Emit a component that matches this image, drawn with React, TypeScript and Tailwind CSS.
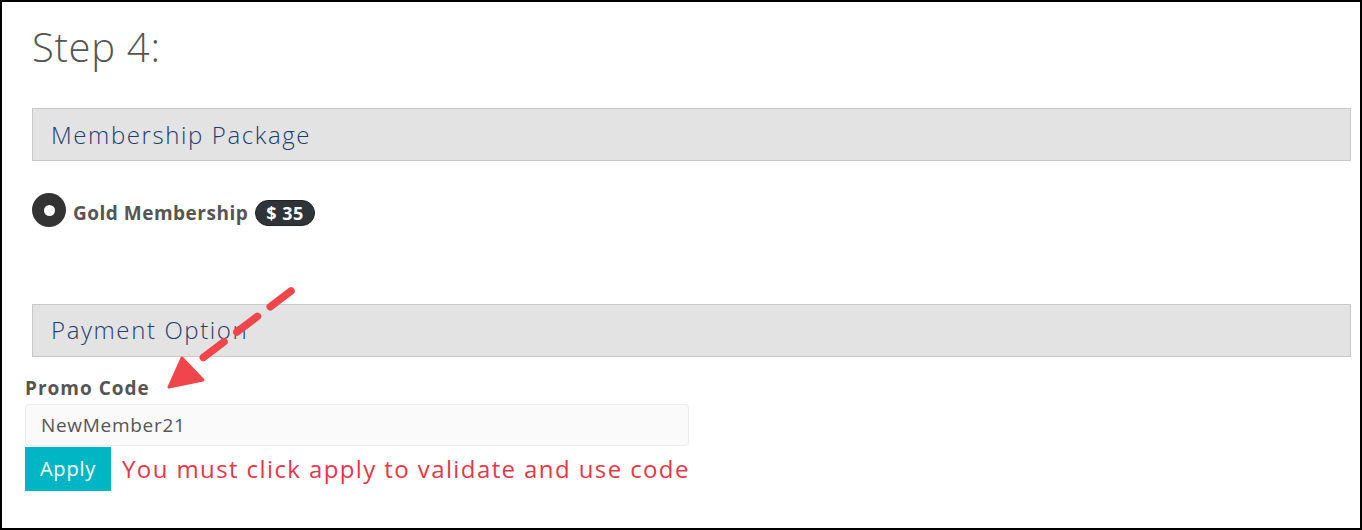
import { useState } from 'react';

function SectionBar({ title }: { title: string }) {
  return (
    <div className="border border-[#c9c9c9] bg-[#e3e3e3] h-[53px] flex items-center pl-[18px]">
      <span className="text-[24px] font-light text-[#1f3d6e] tracking-[1.6px]">{title}</span>
    </div>
  );
}

function Arrow() {
  return (
    <svg className="absolute left-0 top-0 pointer-events-none" width="320" height="400" viewBox="0 0 320 400">
      <line x1="289" y1="289" x2="190" y2="364" stroke="#f0454b" strokeWidth="7.5" strokeLinecap="round" strokeDasharray="26 16" />
      <polygon points="167,385 180,356 201,378" fill="#f0454b" stroke="#f0454b" strokeWidth="3" strokeLinejoin="round" />
    </svg>
  );
}

export default function App() {
  const [code, setCode] = useState('NewMember21');

  return (
    <div className="relative w-[1362px] h-[530px] bg-white border-2 border-black font-['Open_Sans',sans-serif] text-[#555]">
      <div className="pt-[20px] pl-[30px] pr-[9px]">
        <h1 className="text-[40px] font-light text-[#555] leading-[50px] tracking-[0.7px]">Step 4:</h1>
        <div className="mt-[36px]">
          <SectionBar title="Membership Package" />
        </div>
        <div className="mt-[32px] flex items-center">
          <span className="w-[34px] h-[34px] rounded-full bg-[#333] flex items-center justify-center">
            <span className="w-[11px] h-[11px] rounded-full bg-white" />
          </span>
          <span className="ml-[7px] mt-[6px] text-[19px] font-bold text-[#555] tracking-[0.5px]">Gold Membership</span>
          <span className="ml-[7px] mt-[6px] bg-[#2f3438] text-white text-[18px] font-bold rounded-full px-[10px] h-[26px] leading-[25px] border border-[#222] tracking-[0.5px]">$ 35</span>
        </div>
        <div className="mt-[76px]">
          <SectionBar title="Payment Option" />
        </div>
      </div>
      <div className="pl-[23px] mt-[19px]">
        <label className="block text-[19px] font-bold text-[#555] leading-[25px] tracking-[1px]">Promo Code</label>
        <input
          value={code}
          onChange={(e) => setCode(e.target.value)}
          className="mt-[3px] w-[664px] h-[42px] rounded-[4px] border border-[#ececec] bg-[#fafafa] px-[15px] text-[19px] text-[#555] tracking-[0.7px] outline-none"
        />
        <div className="flex items-center mt-[1px]">
          <button className="w-[86px] h-[44px] bg-[#00b6c4] text-white text-[20px] tracking-[0.8px]">Apply</button>
          <span className="ml-[11px] text-[24px] text-[#e4384a] tracking-[1.4px]">You must click apply to validate and use code</span>
        </div>
      </div>
      <Arrow />
    </div>
  );
}
